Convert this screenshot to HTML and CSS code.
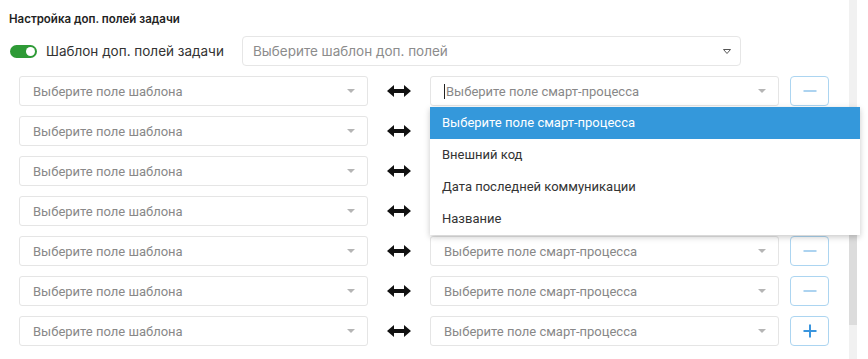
FILE: index.html
```html
<!DOCTYPE html>
<html lang="ru">

<head>
    <meta charset="UTF-8">
    <meta name="viewport" content="width=device-width, initial-scale=1.0">
    <title>Настройка доп. полей задачи</title>
    <link rel="stylesheet" href="styles.css">
</head>

<body>
    <div class="page">
        <main class="panel">
            <h4 class="title">Настройка доп. полей задачи</h4>

            <div class="template-row">
                <label class="toggle-label">
                    <span class="toggle"><span class="knob"></span></span>
                    Шаблон доп. полей задачи
                </label>
                <div class="template-select">
                    <span>Выберите шаблон доп. полей</span>
                    <svg class="tri-outline" width="10" height="7" viewBox="0 0 10 7"><path d="M1.5 1.5 H8.5 L5 5.5 Z" fill="none" stroke="#555" stroke-width="1" stroke-linejoin="round"/></svg>
                </div>
            </div>

            <div class="rows">
                <div class="map-row">
                    <div class="select"><span>Выберите поле шаблона</span><i class="caret"></i></div>
                    <div class="link"><svg width="24" height="12" viewBox="0 0 24 12"><path d="M0 6 L7 0 V4 H17 V0 L24 6 L17 12 V8 H7 V12 Z" fill="#111"/></svg></div>
                    <div class="select select-open">
                        <span><b class="cursor"></b>Выберите поле смарт-процесса</span><i class="caret"></i>
                        <ul class="dropdown">
                            <li class="active">Выберите поле смарт-процесса</li>
                            <li>Внешний код</li>
                            <li>Дата последней коммуникации</li>
                            <li>Название</li>
                        </ul>
                    </div>
                    <button class="btn minus"></button>
                </div>
                <div class="map-row">
                    <div class="select"><span>Выберите поле шаблона</span><i class="caret"></i></div>
                    <div class="link"><svg width="24" height="12" viewBox="0 0 24 12"><path d="M0 6 L7 0 V4 H17 V0 L24 6 L17 12 V8 H7 V12 Z" fill="#111"/></svg></div>
                    <div class="select"><span>Выберите поле смарт-процесса</span><i class="caret"></i></div>
                    <button class="btn minus"></button>
                </div>
                <div class="map-row">
                    <div class="select"><span>Выберите поле шаблона</span><i class="caret"></i></div>
                    <div class="link"><svg width="24" height="12" viewBox="0 0 24 12"><path d="M0 6 L7 0 V4 H17 V0 L24 6 L17 12 V8 H7 V12 Z" fill="#111"/></svg></div>
                    <div class="select"><span>Выберите поле смарт-процесса</span><i class="caret"></i></div>
                    <button class="btn minus"></button>
                </div>
                <div class="map-row">
                    <div class="select"><span>Выберите поле шаблона</span><i class="caret"></i></div>
                    <div class="link"><svg width="24" height="12" viewBox="0 0 24 12"><path d="M0 6 L7 0 V4 H17 V0 L24 6 L17 12 V8 H7 V12 Z" fill="#111"/></svg></div>
                    <div class="select"><span>Выберите поле смарт-процесса</span><i class="caret"></i></div>
                    <button class="btn minus"></button>
                </div>
                <div class="map-row">
                    <div class="select"><span>Выберите поле шаблона</span><i class="caret"></i></div>
                    <div class="link"><svg width="24" height="12" viewBox="0 0 24 12"><path d="M0 6 L7 0 V4 H17 V0 L24 6 L17 12 V8 H7 V12 Z" fill="#111"/></svg></div>
                    <div class="select"><span>Выберите поле смарт-процесса</span><i class="caret"></i></div>
                    <button class="btn minus"></button>
                </div>
                <div class="map-row">
                    <div class="select"><span>Выберите поле шаблона</span><i class="caret"></i></div>
                    <div class="link"><svg width="24" height="12" viewBox="0 0 24 12"><path d="M0 6 L7 0 V4 H17 V0 L24 6 L17 12 V8 H7 V12 Z" fill="#111"/></svg></div>
                    <div class="select"><span>Выберите поле смарт-процесса</span><i class="caret"></i></div>
                    <button class="btn minus"></button>
                </div>
                <div class="map-row">
                    <div class="select"><span>Выберите поле шаблона</span><i class="caret"></i></div>
                    <div class="link"><svg width="24" height="12" viewBox="0 0 24 12"><path d="M0 6 L7 0 V4 H17 V0 L24 6 L17 12 V8 H7 V12 Z" fill="#111"/></svg></div>
                    <div class="select"><span>Выберите поле смарт-процесса</span><i class="caret"></i></div>
                    <button class="btn plus"></button>
                </div>
            </div>
        </main>
        <div class="scrollbar"><div class="thumb"></div></div>
    </div>
</body>

</html>
```

FILE: styles.css
```css
body {
    margin: 0;
    padding: 0;
    background: #fff;
    color: #222;
    font-family: Inter, 'Noto Sans', sans-serif;
}

.page {
    display: flex;
    height: 359px;
    overflow: hidden;
    padding-right: 11px;
}

.panel {
    flex: 1;
    padding: 12px 0 0 9px;
    position: relative;
}

.title {
    margin: 0;
    font-size: 11.5px;
    font-weight: 600;
    line-height: 14px;
    color: #222;
}

.template-row {
    display: flex;
    align-items: center;
    margin-top: 10px;
}

.toggle-label {
    display: flex;
    align-items: center;
    gap: 9px;
    width: 233px;
    font-size: 13.5px;
    color: #333;
}

.toggle {
    display: inline-block;
    width: 27px;
    height: 13px;
    border-radius: 7px;
    background: #2e9a36;
    position: relative;
    margin-left: 1px;
}

.knob {
    position: absolute;
    right: 2px;
    top: 2px;
    width: 9px;
    height: 9px;
    border-radius: 50%;
    background: #fff;
}

.template-select {
    width: 499px;
    height: 30px;
    box-sizing: border-box;
    border: 1px solid #e6e6e6;
    border-radius: 4px;
    display: flex;
    align-items: center;
    justify-content: space-between;
    padding: 0 8px 0 10px;
    font-size: 13.5px;
    color: #8c8c8c;
}

.rows {
    margin-top: 10px;
    padding-left: 10px;
    display: flex;
    flex-direction: column;
    gap: 10px;
}

.map-row {
    display: flex;
    align-items: center;
    height: 30px;
}

.select {
    width: 349px;
    height: 30px;
    box-sizing: border-box;
    border: 1px solid #e5e5e5;
    border-radius: 3px;
    display: flex;
    align-items: center;
    justify-content: space-between;
    padding: 0 12px 0 13px;
    font-family: Roboto, Arial, sans-serif;
    font-size: 13px;
    color: #888;
    position: relative;
}

.caret {
    width: 0;
    height: 0;
    border-left: 4px solid transparent;
    border-right: 4px solid transparent;
    border-top: 4px solid #b5b5b5;
}

.cursor {
    display: inline-block;
    width: 1px;
    height: 15px;
    background: #222;
    vertical-align: -3px;
    margin-right: 1px;
}

.link {
    width: 61px;
    display: flex;
    justify-content: center;
    padding-right: 1px;
}

.btn {
    margin-left: 11px;
    width: 39px;
    height: 30px;
    box-sizing: border-box;
    border: 1px solid #acd5f1;
    border-radius: 4px;
    background: #fff;
    position: relative;
    padding: 0;
}

.btn::before,
.btn.plus::after {
    content: '';
    position: absolute;
    left: 50%;
    top: 50%;
    background: #5aa8e2;
}

.btn::before {
    width: 13px;
    height: 1px;
    transform: translate(-50%, -50%);
}

.btn.plus::before {
    width: 13px;
    height: 2px;
    background: #3a95de;
}

.btn.plus::after {
    width: 2px;
    height: 13px;
    background: #3a95de;
    transform: translate(-50%, -50%);
}

.dropdown {
    position: absolute;
    left: -1px;
    top: 30px;
    width: 430px;
    margin: 0;
    padding: 0;
    list-style: none;
    background: #fff;
    box-shadow: 0 2px 6px rgba(0, 0, 0, 0.22);
    z-index: 10;
}

.dropdown li {
    height: 32px;
    line-height: 32px;
    padding-left: 12px;
    font-size: 13px;
    color: #333;
}

.dropdown li.active {
    background: #3498db;
    color: #fff;
}

.scrollbar {
    width: 8px;
    background: #f1f1f1;
    height: 359px;
}

.thumb {
    margin-top: 150px;
    height: 175px;
    background: #dcdcdc;
}
```
